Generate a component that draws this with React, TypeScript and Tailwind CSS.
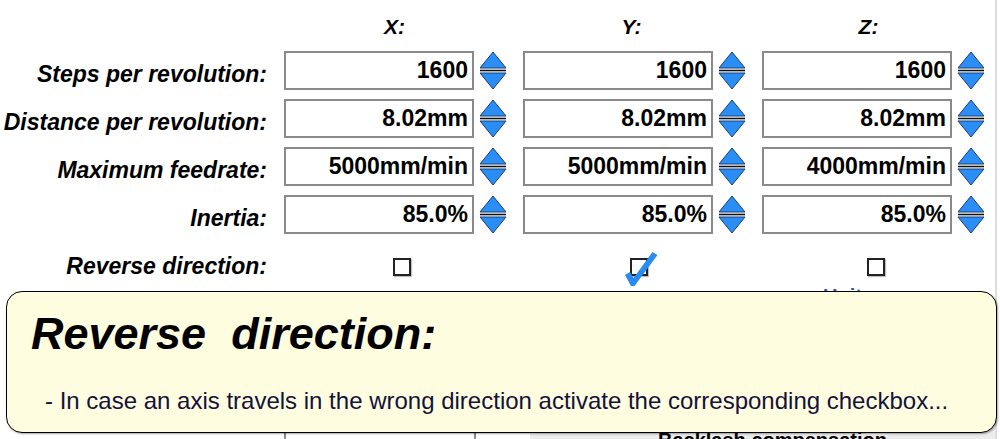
import React from 'react';

const rows = [
  { label: 'Steps per revolution:', values: ['1600', '1600', '1600'] },
  { label: 'Distance per revolution:', values: ['8.02mm', '8.02mm', '8.02mm'] },
  { label: 'Maximum feedrate:', values: ['5000mm/min', '5000mm/min', '4000mm/min'] },
  { label: 'Inertia:', values: ['85.0%', '85.0%', '85.0%'] },
];

const reversed = [false, true, false];

const Spinner: React.FC = () => (
  <svg width="28" height="39" viewBox="0 0 28 39" className="shrink-0">
    <polygon points="14,1 27,17 1,17" fill="#2b8ef6" stroke="#1b3d73" strokeWidth="1" strokeLinejoin="round" />
    <line x1="1" y1="19.5" x2="27" y2="19.5" stroke="#111" strokeWidth="1.6" />
    <polygon points="1,22 27,22 14,38" fill="#2b8ef6" stroke="#1b3d73" strokeWidth="1" strokeLinejoin="round" />
  </svg>
);

const Tick: React.FC = () => (
  <svg width="34" height="36" viewBox="0 0 34 36" className="absolute left-[-8px] top-[-9px]">
    <path d="M1 24 L6 21 L9.5 27 L28.5 1 L33.5 4 L10.5 35 L7 35 Z" fill="#2a8cf2" />
  </svg>
);

export default function App() {
  return (
    <div className="relative w-[1000px] h-[439px] overflow-hidden bg-white font-['Liberation_Sans',Arial,sans-serif] text-black">
      <div className="w-[997px] h-[439px] border-r-2 border-[#dedede]">
        {/* Axis headers */}
        <div className="flex pt-[16px] leading-none">
          <div className="w-[284px] shrink-0" />
          {['X:', 'Y:', 'Z:'].map((h) => (
            <div key={h} className="w-[223px] mr-[16px] text-center text-[21px] font-bold italic">
              {h}
            </div>
          ))}
        </div>

        {/* Parameter rows */}
        <div className="mt-[14px] flex flex-col gap-[9px]">
          {rows.map((row) => (
            <div key={row.label} className="flex h-[39px]">
              <div className="w-[267px] shrink-0 pt-[12px] text-right text-[23px] leading-none font-bold italic whitespace-nowrap">
                {row.label}
              </div>
              <div className="w-[17px] shrink-0" />
              {row.values.map((v, i) => (
                <div key={i} className="flex w-[223px] mr-[16px] gap-[5px]">
                  <div className="flex w-[190px] h-[39px] items-center justify-end border-2 border-[#8a8a8a] bg-white pr-[4px] text-[23px] leading-none font-bold">
                    {v}
                  </div>
                  <Spinner />
                </div>
              ))}
            </div>
          ))}
        </div>

        {/* Reverse direction row */}
        <div className="mt-[21px] flex h-[23px]">
          <div className="w-[267px] shrink-0 text-right text-[23px] leading-none font-bold italic whitespace-nowrap">
            Reverse direction:
          </div>
          <div className="w-[17px] shrink-0" />
          {reversed.map((on, i) => (
            <div key={i} className="flex w-[223px] mr-[16px] justify-center pl-[14px] pt-[3px]">
              <div className="relative w-[18px] h-[18px] border-2 border-[#222] bg-white shadow-[1px_1px_1px_rgba(0,0,0,0.25)]">
                {on && <Tick />}
              </div>
            </div>
          ))}
        </div>

        {/* Partially hidden content under the tooltip */}
        <div className="mt-[8px] flex h-[20px] pl-[823px] text-[20px] leading-none font-bold text-[#2a5db0]">
          Units: mm
        </div>
        <div className="mt-[122px] flex items-start">
          <div className="w-[284px] shrink-0" />
          <div className="w-[192px] h-[30px] border-2 border-[#8a8a8a]" />
          <div className="w-[54px] shrink-0" />
          <div className="flex-1 h-[30px] bg-[#ececec] pl-[128px] pt-[2px] text-[20px] font-bold leading-none">
            Backlash compensation
          </div>
        </div>
      </div>

      {/* Tooltip */}
      <div className="absolute left-[6px] top-[291px] w-[991px] h-[142px] rounded-[16px] border-[1.5px] border-black bg-[#fffde0] shadow-[1px_1px_2px_rgba(0,0,0,0.35)]">
        <div className="pl-[24px] pt-[19px] text-[45px] leading-none font-bold italic whitespace-pre">
          {'Reverse  direction:'}
        </div>
        <div className="mt-[33px] pl-[38px] text-[24px] leading-none text-[#14123a] whitespace-nowrap">
          - In case an axis travels in the wrong direction activate the corresponding checkbox...
        </div>
      </div>
    </div>
  );
}
